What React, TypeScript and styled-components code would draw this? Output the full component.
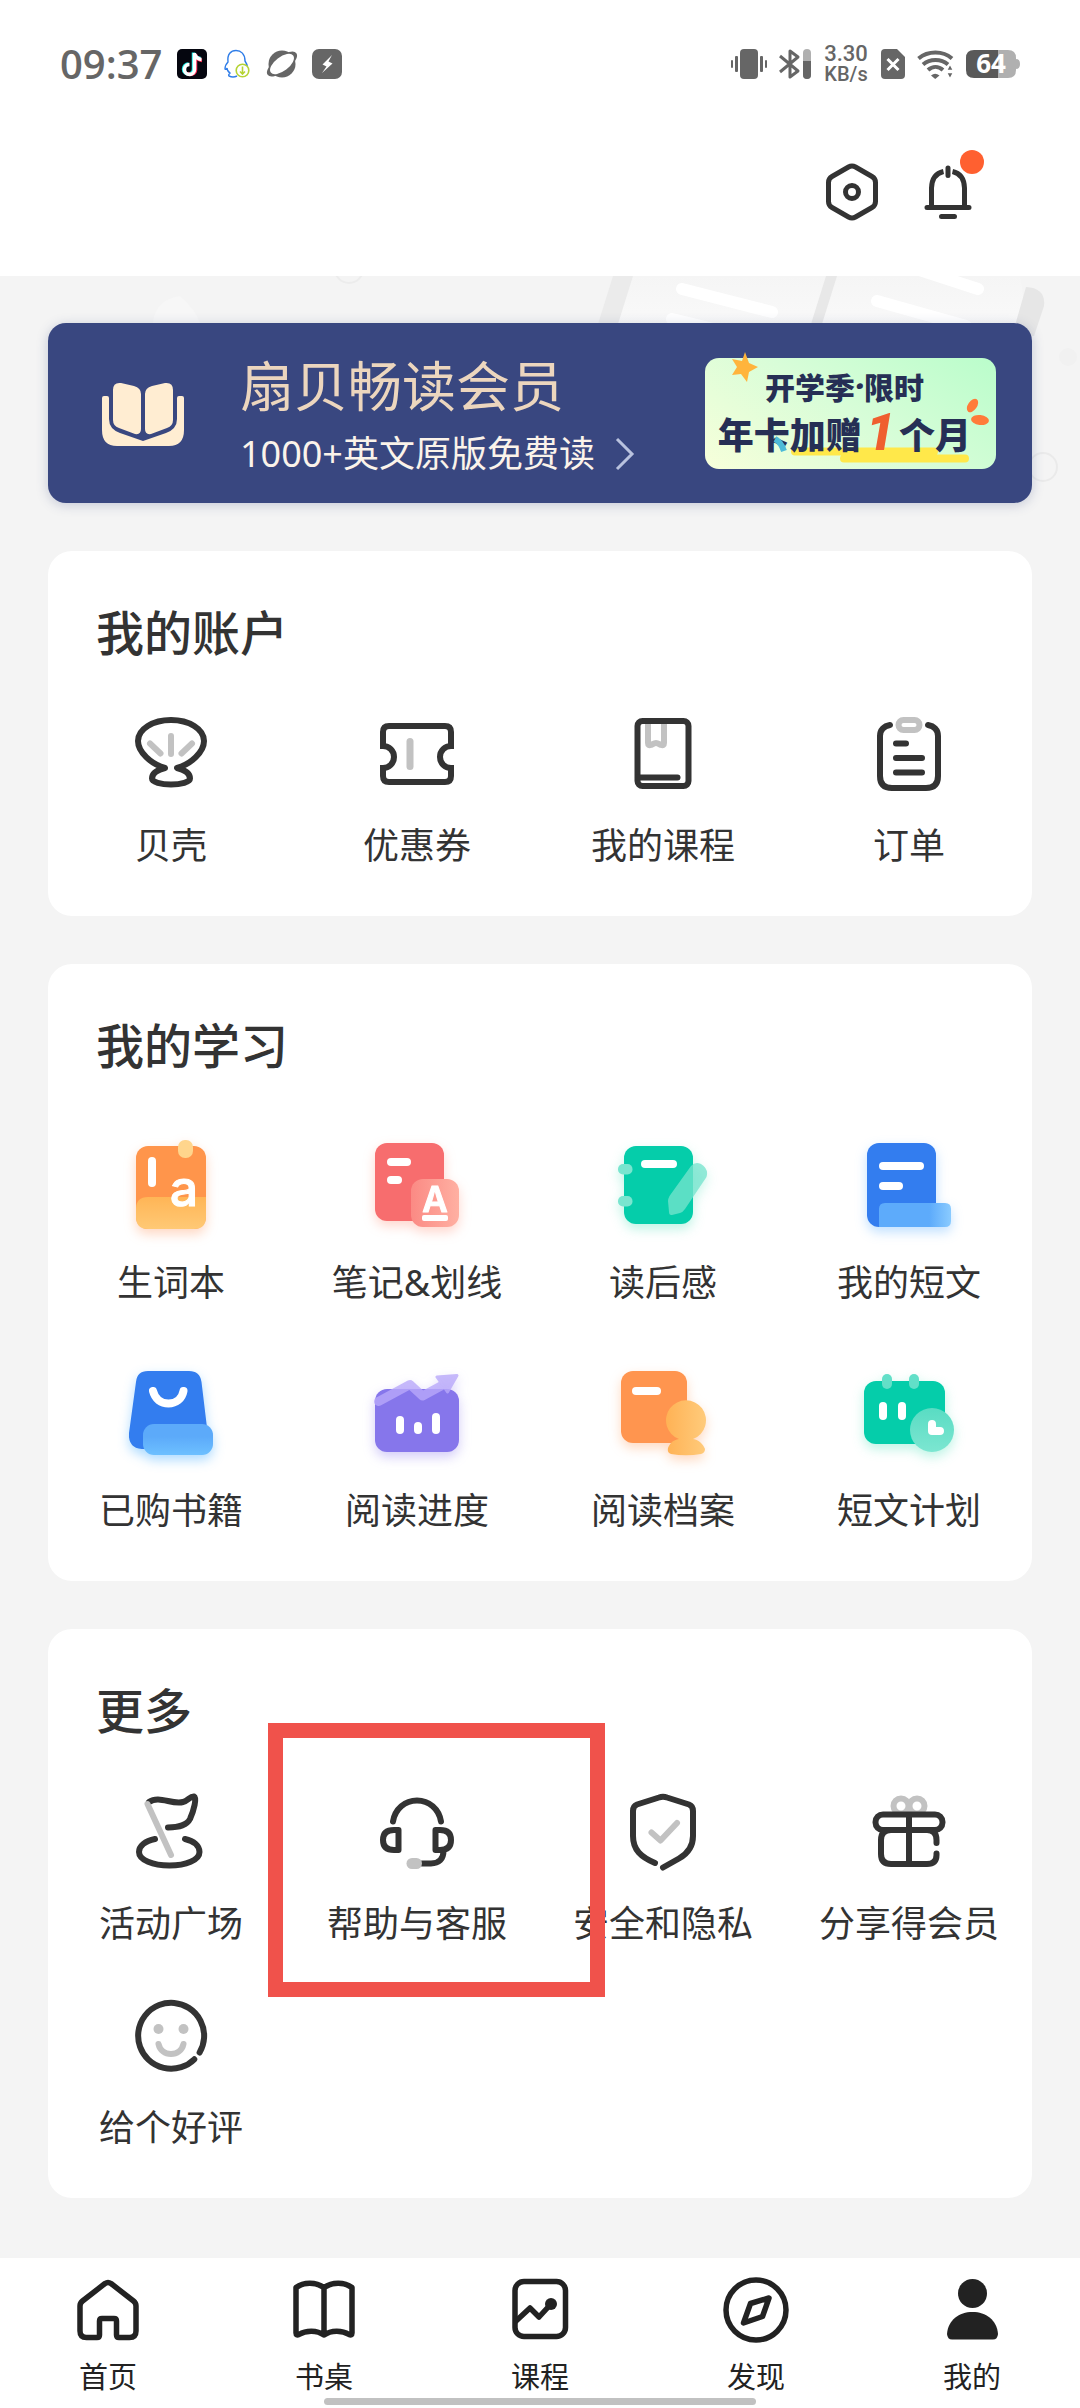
import React from "react";
import styled, { createGlobalStyle, css } from "styled-components";

const GlobalStyle = createGlobalStyle`
  * { box-sizing: border-box; }
  body {
    margin: 0;
    background: #f4f4f4;
    color: #333;
    font-family: "Noto Sans", "Noto Sans CJK SC", sans-serif;
  }
  a { color: inherit; text-decoration: none; }
  svg { display: block; flex: none; overflow: visible; }
`;

/* ---------- layout ---------- */

const Page = styled.div`
  display: flex;
  flex-direction: column;
  min-height: 100vh;
`;

const Header = styled.header`
  background: #fff;
  padding-bottom: 20px;
`;

const StatusBar = styled.div`
  display: flex;
  justify-content: space-between;
  align-items: center;
  height: 128px;
  padding: 0 60px;
  color: #666;
`;

const StatusGroup = styled.div<{ $gap: number }>`
  display: flex;
  align-items: center;
  gap: ${(p) => p.$gap}px;
`;

const Clock = styled.time`
  font-family: "Open Sans", sans-serif;
  font-size: 40px;
  line-height: 48px;
  font-weight: 600;
`;

const Speed = styled.div`
  display: flex;
  flex-direction: column;
  align-items: center;
  width: 46px;
  font-family: Roboto, sans-serif;
  font-size: 22px;
  line-height: 20px;
  font-weight: 500;
`;

const SpeedUnit = styled.span`
  font-size: 20px;
`;

const Toolbar = styled.div`
  display: flex;
  justify-content: flex-end;
  align-items: center;
  gap: 36px;
  height: 128px;
  padding: 0 102px;
`;

const IconButton = styled.button`
  position: relative;
  width: 60px;
  height: 60px;
  padding: 0;
  border: 0;
  background: none;
  color: #333;
`;

const UnreadDot = styled.span`
  position: absolute;
  top: -12px;
  right: -6px;
  width: 24px;
  height: 24px;
  border-radius: 50%;
  background: #ff6030;
`;

const Body = styled.main`
  position: relative;
  display: flex;
  flex: 1;
  flex-direction: column;
  gap: 48px;
  padding: 47px 48px 60px;
`;

const Backdrop = styled.div`
  position: absolute;
  top: 0;
  left: 0;
  right: 0;
  overflow: hidden;
`;

/* ---------- membership banner ---------- */

const Banner = styled.a`
  position: relative;
  display: flex;
  align-items: center;
  height: 180px;
  padding: 0 36px 0 54px;
  border-radius: 18px;
  background: #394780;
  box-shadow: 0 2px 12px rgba(57, 71, 128, 0.25);
`;

const BannerText = styled.div`
  display: flex;
  flex-direction: column;
  gap: 6px;
  margin-left: 56px;
`;

const BannerTitle = styled.span`
  color: #ecd6be;
  font-size: 54px;
  line-height: 76px;
`;

const BannerSub = styled.span`
  display: flex;
  align-items: center;
  gap: 20px;
  color: #fbf3ea;
  font-size: 36px;
  line-height: 48px;
`;

const Promo = styled.div`
  position: relative;
  display: flex;
  flex-direction: column;
  align-items: center;
  width: 291px;
  height: 111px;
  margin-left: auto;
  padding: 9px 12px 0 0;
  border-radius: 14px;
  background: linear-gradient(35deg, #f7ffda 0%, #d8fdd8 50%, #bafdcb 100%);
  color: #262f55;
  font-family: "Noto Sans CJK SC", sans-serif;
  font-style: oblique 8deg;
  font-weight: 900;
`;

const PromoArt = styled.svg`
  position: absolute;
  top: 0;
  left: 0;
`;

const PromoTop = styled.span`
  position: relative;
  display: flex;
  font-size: 30px;
  line-height: 38px;
`;

const PromoDot = styled.span`
  font-family: "Noto Sans", sans-serif;
`;

const PromoBottom = styled.span`
  position: relative;
  display: flex;
  align-items: center;
  gap: 4px;
  font-size: 36px;
  line-height: 56px;
`;

const PromoCount = styled.b`
  color: #ef5f2f;
  font-family: Roboto, sans-serif;
  font-size: 52px;
  font-weight: 900;
`;

/* ---------- cards ---------- */

type Kind = "line" | "color";

const kinds = {
  line: { top: 42, gap: 24, rowGap: 42 },
  color: { top: 45, gap: 13, rowGap: 45 },
};

const Card = styled.section`
  position: relative;
  padding: 48px 0 45px;
  border-radius: 24px;
  background: #fff;
`;

const CardTitle = styled.h2`
  margin: 0;
  padding: 0 48px;
  font-size: 48px;
  line-height: 68px;
  font-weight: 500;
`;

const Grid = styled.div<{ $kind: Kind }>`
  display: grid;
  grid-template-columns: repeat(4, 1fr);
  row-gap: ${(p) => kinds[p.$kind].rowGap}px;
  margin-top: ${(p) => kinds[p.$kind].top}px;
`;

const Item = styled.a<{ $kind: Kind; $marked?: boolean }>`
  position: relative;
  display: flex;
  flex-direction: column;
  align-items: center;
  gap: ${(p) => kinds[p.$kind].gap}px;
  ${(p) =>
    p.$marked &&
    css`
      z-index: 1;
      &::after {
        content: "";
        position: absolute;
        inset: -64px -65px -48px -26px;
        border: 15px solid #f0524b;
      }
    `}
`;

const ItemLabel = styled.span`
  font-size: 36px;
  line-height: 50px;
  white-space: nowrap;
`;

/* ---------- bottom navigation ---------- */

const Nav = styled.nav`
  background: #fff;
  color: #222;
  padding: 16px 0 3px;
`;

const Tabs = styled.div`
  display: grid;
  grid-template-columns: repeat(5, 1fr);
`;

const Tab = styled.a`
  display: flex;
  flex-direction: column;
  align-items: center;
  gap: 10px;
  font-size: 29px;
  line-height: 42px;
`;

const HomeBar = styled.div`
  width: 40%;
  height: 7px;
  margin: 0 auto;
  border-radius: 4px;
  background: #c1c1c1;
`;

/* ---------- icon frames ---------- */

const LineIcon = ({ children }: { children: React.ReactNode }) => (
  <svg width="88" height="88" viewBox="0 0 88 88" fill="none" stroke="#333" strokeWidth="6" strokeLinecap="round" strokeLinejoin="round" aria-hidden="true">
    {children}
  </svg>
);

const GlowSvg = styled.svg<{ $glow: string }>`
  filter: drop-shadow(0 5px 6px ${(p) => p.$glow});
`;

const ColorIcon = ({ glow, children }: { glow: string; children: React.ReactNode }) => (
  <GlowSvg $glow={glow} width="120" height="120" viewBox="0 0 120 120" aria-hidden="true">
    {children}
  </GlowSvg>
);

const TabIcon = ({ children }: { children: React.ReactNode }) => (
  <svg width="72" height="72" viewBox="0 0 72 72" fill="none" stroke="#222" strokeWidth="5.5" strokeLinecap="round" strokeLinejoin="round" aria-hidden="true">
    {children}
  </svg>
);

const PALE = "#c2c2c2";

/* ---------- card data ---------- */

type Entry = { label: string; icon: React.ReactNode; marked?: boolean };

const account: Entry[] = [
  {
    label: "贝壳",
    icon: (
      <LineIcon>
        <path d="M38 59C24 55 11 43 11 32C11 20 26 11 44 11C62 11 77 20 77 32C77 43 64 55 50 59C58 61 63 65 63 69.500C63 73 54 75.500 44 75.500C34 75.500 25 73 25 69.500C25 65 30 61 38 59Z" />
        <path stroke={PALE} d="M23 34.500L33.500 44.500M44 27V45M65 34.500L54.500 44.500" />
      </LineIcon>
    ),
  },
  {
    label: "优惠券",
    icon: (
      <LineIcon>
        <path strokeLinejoin="miter" d="M10 37V23Q10 17 16 17H72Q78 17 78 23V37A11 11 0 0 0 78 59V67Q78 73 72 73H16Q10 73 10 67V59A11 11 0 0 0 10 37Z" />
        <path stroke={PALE} strokeWidth="7" d="M37 32.500V57.500" />
      </LineIcon>
    ),
  },
  {
    label: "我的课程",
    icon: (
      <LineIcon>
        <path stroke={PALE} d="M29 15V34Q29 37 32 36L34 35Q37 33 40 35L42 36Q45 37 45 34V15" />
        <rect x="18.500" y="12" width="51" height="65" rx="5" />
        <path d="M19 68.500H58.500" />
      </LineIcon>
    ),
  },
  {
    label: "订单",
    icon: (
      <LineIcon>
        <path d="M25 16C19 17 15 21 15 27V67Q15 79 27 79H61Q73 79 73 67V27C73 21 69 17 63 16M31 34.500H41M31 49H57M31 63.500H57" />
        <rect x="33.500" y="11" width="21" height="10" rx="5" stroke={PALE} />
      </LineIcon>
    ),
  },
];

const study: Entry[] = [
  {
    label: "生词本",
    icon: (
      <ColorIcon glow="rgba(255,140,80,.35)">
        <linearGradient id="wordFoot" x1="0" y1="0" x2="0" y2="1">
          <stop offset="0" stopColor="#ffb556" />
          <stop offset="1" stopColor="#ffc975" />
        </linearGradient>
        <rect x="25" y="21" width="70" height="83" rx="12" fill="#ff954b" />
        <path fill="url(#wordFoot)" d="M25 84Q25 72 37 72H95V92Q95 104 83 104H37Q25 104 25 92Z" />
        <rect x="67" y="15" width="15" height="18" rx="7" fill="#ffd58c" />
        <rect x="37" y="32" width="8" height="30" rx="4" fill="#fff" />
        <text x="73" y="81" fill="#fff" stroke="#fff" strokeWidth="1" fontFamily="Inter, sans-serif" fontWeight="500" fontSize="50" textAnchor="middle">a</text>
      </ColorIcon>
    ),
  },
  {
    label: "笔记&划线",
    icon: (
      <ColorIcon glow="rgba(255,120,90,.3)">
        <linearGradient id="noteTile">
          <stop offset="0" stopColor="#fb8a84" />
          <stop offset="1" stopColor="#ffb0a2" />
        </linearGradient>
        <rect x="18" y="18" width="69" height="78" rx="12" fill="#f76d6e" />
        <rect x="54" y="54" width="48" height="48" rx="12" fill="url(#noteTile)" />
        <rect x="30" y="33" width="24" height="8" rx="4" fill="#fff" />
        <rect x="30" y="51" width="15" height="8" rx="4" fill="#fff" />
        <text x="78" y="87" fill="#fff" stroke="#fff" strokeWidth="1" strokeLinejoin="round" fontFamily="Inter, sans-serif" fontWeight="600" fontSize="35" textAnchor="middle">A</text>
        <rect x="65" y="90" width="26" height="6" rx="2" fill="#fff" />
      </ColorIcon>
    ),
  },
  {
    label: "读后感",
    icon: (
      <ColorIcon glow="rgba(40,220,170,.3)">
        <rect x="21" y="21" width="69" height="78" rx="12" fill="#05cdaa" />
        <rect x="15" y="39" width="14.500" height="10.500" rx="5" fill="#79e5cf" />
        <rect x="15" y="71" width="14.500" height="10.500" rx="5" fill="#79e5cf" />
        <rect x="38" y="35" width="36" height="8" rx="4" fill="#fff" />
        <path fill="rgba(117,228,206,.77)" d="M65 76Q65 74 66.500 71L88 41Q92 36.500 98 39Q106 44 103.500 52L82 84Q80 87 77 88L69 90Q66 90.500 66 87Z" />
      </ColorIcon>
    ),
  },
  {
    label: "我的短文",
    icon: (
      <ColorIcon glow="rgba(60,160,255,.32)">
        <linearGradient id="essayFoot">
          <stop offset=".7" stopColor="#5dabfb" />
          <stop offset="1" stopColor="#8acbff" />
        </linearGradient>
        <rect x="18" y="18" width="69" height="84" rx="12" fill="#337def" />
        <path fill="url(#essayFoot)" d="M30 84Q30 78 36 78H96Q102 78 102 84V96Q102 102 96 102H30Z" />
        <rect x="30" y="37" width="45" height="8" rx="4" fill="#fff" />
        <rect x="30" y="57" width="24" height="8" rx="4" fill="#fff" />
      </ColorIcon>
    ),
  },
  {
    label: "已购书籍",
    icon: (
      <ColorIcon glow="rgba(40,160,255,.38)">
        <linearGradient id="bagFoot" x1="0" y1="0" x2="0" y2="1">
          <stop offset=".4" stopColor="#5caafa" />
          <stop offset="1" stopColor="#6dc0ff" />
        </linearGradient>
        <path fill="#337def" d="M37 18H78Q89 18 90.500 29L97 83Q98 96 86 96H31Q17 95 18 80L25 29Q26 18 37 18Z" />
        <rect x="32" y="71" width="70" height="31" rx="11" fill="url(#bagFoot)" />
        <path fill="none" stroke="#fff" strokeWidth="8" strokeLinecap="round" d="M42 38C44 46 50 50.500 57.500 50.500S71 46 72.500 38" />
      </ColorIcon>
    ),
  },
  {
    label: "阅读进度",
    icon: (
      <ColorIcon glow="rgba(130,110,235,.35)">
        <rect x="18" y="36" width="84" height="63" rx="12" fill="#8676eb" />
        <g opacity=".8">
          <path fill="none" stroke="#b9a9fa" strokeWidth="9" strokeLinecap="round" strokeLinejoin="round" d="M21.500 48.500L53 31.500L65.500 43L84 33" />
          <path fill="#b9a9fa" stroke="#b9a9fa" strokeWidth="3" strokeLinejoin="round" d="M80 24L100 22.500L90.500 39Z" />
        </g>
        <rect x="39" y="63" width="8" height="18" rx="4" fill="#fff" />
        <rect x="57" y="69" width="8" height="12" rx="4" fill="#fff" />
        <rect x="75" y="60" width="8" height="21" rx="4" fill="#fff" />
      </ColorIcon>
    ),
  },
  {
    label: "阅读档案",
    icon: (
      <ColorIcon glow="rgba(255,150,80,.35)">
        <linearGradient id="fileSeal">
          <stop offset="0" stopColor="#ffb255" />
          <stop offset="1" stopColor="#ffcb7b" />
        </linearGradient>
        <rect x="18" y="18" width="66" height="72" rx="12" fill="#ff954f" />
        <path fill="url(#fileSeal)" d="M76 86A20 20 0 1 1 90 86C96 87 100 91 102 96Q102 100 98 101Q83 103.500 68 101Q64 100 65 95C67 90 70 87 76 86Z" />
        <rect x="29" y="34" width="29" height="8" rx="4" fill="#fff" />
      </ColorIcon>
    ),
  },
  {
    label: "短文计划",
    icon: (
      <ColorIcon glow="rgba(40,220,170,.3)">
        <linearGradient id="planClock" x1="0" y1="0" x2="0" y2="1">
          <stop offset="0" stopColor="#59dcc3" />
          <stop offset="1" stopColor="#7ce6d1" />
        </linearGradient>
        <rect x="15" y="28" width="81" height="63" rx="12" fill="#05cdaa" />
        <rect x="33" y="21" width="10" height="15" rx="5" fill="#62dfc8" />
        <rect x="60" y="21" width="10" height="15" rx="5" fill="#62dfc8" />
        <rect x="30" y="49" width="8" height="18" rx="4" fill="#fff" />
        <rect x="49" y="49" width="8" height="18" rx="4" fill="#fff" />
        <circle cx="83" cy="77" r="22" fill="url(#planClock)" />
        <path fill="none" stroke="#fff" strokeWidth="8" strokeLinecap="round" strokeLinejoin="round" d="M83 71V78H91" />
      </ColorIcon>
    ),
  },
];

const more: Entry[] = [
  {
    label: "活动广场",
    icon: (
      <LineIcon>
        <path d="M22 15C32 8 45 18 56 15C61 14 63 9 67 9.500C70 11 67 23 63 32C60 38 53 40 41 40.500M28 52C18 54 12 59 12 65C12 73 26 78.500 42.500 78.500C59 78.500 72.500 73 72.500 65C72.500 59 67 54 58 52" />
        <path stroke={PALE} d="M20.500 17L44 68" />
      </LineIcon>
    ),
  },
  {
    label: "帮助与客服",
    marked: true,
    icon: (
      <LineIcon>
        <path d="M20 34.500C22 22 32 13.500 44 13.500C56 13.500 66 22 68 34.500M25.500 43H21Q10 43 10 53Q10 63 21 63H25.500ZM62.500 43H67Q78 43 78 53Q78 63 67 63H62.500ZM70.500 64C70.500 72 66 76.500 58 76.500H49" />
        <rect x="33.500" y="71" width="15.500" height="11" rx="5.500" fill={PALE} stroke="none" />
      </LineIcon>
    ),
  },
  {
    label: "安全和隐私",
    icon: (
      <LineIcon>
        <path d="M36 76C22 70 14 63 14 49V24Q14 19 18 17.500L40 10.500Q44 9 48 10.500L70 17.500Q74 19 74 24V49C74 60 68 67 60 71.500L44 80.500" />
        <path stroke={PALE} d="M32.500 45.500L41.500 53.500L58 36" />
      </LineIcon>
    ),
  },
  {
    label: "分享得会员",
    icon: (
      <LineIcon>
        <g stroke={PALE}>
          <circle cx="36" cy="19" r="7.500" />
          <circle cx="52" cy="19" r="7.500" />
        </g>
        <rect x="10.500" y="27.500" width="67" height="15.500" rx="7.500" fill="#fff" />
        <path d="M71.500 56V53Q71.500 43 62 43H26Q16 43 16 53V67Q16 77 26 77H62Q71.500 77 71.500 68V66.500M44 28V77" />
      </LineIcon>
    ),
  },
  {
    label: "给个好评",
    icon: (
      <LineIcon>
        <path d="M72.600 61.500A33 33 0 1 0 67.300 68.300" />
        <g fill={PALE} stroke="none">
          <circle cx="31.500" cy="38" r="5" />
          <circle cx="56.500" cy="38" r="5" />
        </g>
        <path stroke={PALE} d="M31.500 53C33 59.500 38 63 44 63S55 59.500 56.500 53" />
      </LineIcon>
    ),
  },
];

const tabs: Entry[] = [
  {
    label: "首页",
    icon: (
      <TabIcon>
        <path d="M8 32Q8 29 10.500 27L33 9.500Q36 7.500 39 9.500L61.500 27Q64 29 64 32V57Q64 63.500 57.500 63.500H47Q44.500 63.500 44.500 61V47Q44.500 44.500 42 44.500H30Q27.500 44.500 27.500 47V61Q27.500 63.500 25 63.500H14.500Q8 63.500 8 57Z" />
      </TabIcon>
    ),
  },
  {
    label: "书桌",
    icon: (
      <TabIcon>
        <path d="M36 13.500C28 8 16 7.500 8 13.500V59Q8 62 11 60.500C18 56 29 56 36 61C43 56 54 56 61 60.500Q64 62 64 59V13.500C56 7.500 44 8 36 13.500V61" />
      </TabIcon>
    ),
  },
  {
    label: "课程",
    icon: (
      <TabIcon>
        <rect x="11" y="7.500" width="50.500" height="55" rx="9" />
        <path d="M12 47L26 34L35 43L47 30" />
        <circle cx="47" cy="30" r="6" fill="#222" stroke="none" />
      </TabIcon>
    ),
  },
  {
    label: "发现",
    icon: (
      <TabIcon>
        <circle cx="36" cy="36" r="30" />
        <path d="M49 24L30.500 29.500L23.500 49L42.500 42.500Z" />
      </TabIcon>
    ),
  },
  {
    label: "我的",
    icon: (
      <TabIcon>
        <g fill="#222" stroke="none">
          <circle cx="36.500" cy="19.500" r="14.500" />
          <path d="M11 60C12 46 23 38 36.500 38C50 38 61 46 62 60Q61.500 65.500 57 65.500H16Q11.500 65.500 11 60Z" />
        </g>
      </TabIcon>
    ),
  },
];

/* ---------- sections ---------- */

const EntryCard = ({ title, kind, entries }: { title: string; kind: Kind; entries: Entry[] }) => (
  <Card>
    <CardTitle>{title}</CardTitle>
    <Grid $kind={kind}>
      {entries.map((e) => (
        <Item key={e.label} href="#" $kind={kind} $marked={e.marked}>
          {e.icon}
          <ItemLabel>{e.label}</ItemLabel>
        </Item>
      ))}
    </Grid>
  </Card>
);

const StatusLeft = () => (
  <StatusGroup $gap={15}>
    <Clock>09:37</Clock>
    <svg width="30" height="30" viewBox="0 0 30 30" aria-hidden="true">
      <rect width="30" height="30" rx="5" fill="#05060f" />
      <g fill="none" strokeWidth="3.500">
        <path stroke="#25f4ee" d="M16.500 3.500V20A5 5 0 1 1 11.500 15M16.500 4Q18 9 23.500 9.500" />
        <path stroke="#fe2c55" d="M18.500 5V21A5 5 0 0 1 10 24M18.500 6Q20 11 25 11.500" />
        <path stroke="#fff" d="M17.500 4V20.500A5 5 0 1 1 12.500 15.500M17.500 4.500Q19 10 24.500 10.500" />
      </g>
    </svg>
    <svg width="30" height="30" viewBox="0 0 30 30" fill="none" aria-hidden="true">
      <path stroke="#2f7de8" strokeWidth="1.400" d="M15 27Q11 29 7 27Q6 26 8 24Q5 22 5 19Q4 21 3 20Q3 16 6 13C5 5 9 1.500 14 1.500S23 5 23 12Q25 15 25.500 18" />
      <circle cx="20.500" cy="21.500" r="6.300" fill="#fff" stroke="#b5d333" strokeWidth="1.600" />
      <path stroke="#b5d333" strokeWidth="1.600" d="M20.500 17.500V25M18 22.500L20.500 25L23 22.500" />
    </svg>
    <svg width="30" height="30" viewBox="0 0 30 30" aria-hidden="true">
      <circle cx="15" cy="15" r="13.500" fill="#666" />
      <ellipse cx="15" cy="15" rx="18" ry="7.500" fill="#666" transform="rotate(-37 15 15)" />
      <ellipse cx="15" cy="15" rx="14" ry="7" fill="#fff" transform="rotate(-37 15 15)" />
    </svg>
    <svg width="30" height="30" viewBox="0 0 30 30" aria-hidden="true">
      <rect width="30" height="30" rx="7" fill="#666" />
      <path fill="#fff" d="M20 6L10.500 15.500L14.500 17.500L10 24L20.500 14.500L16.500 12.500Z" />
    </svg>
  </StatusGroup>
);

const StatusRight = () => (
  <StatusGroup $gap={12}>
    <svg width="36" height="30" viewBox="0 0 36 30" fill="#666" aria-hidden="true">
      <rect x="9" width="18" height="30" rx="4" />
      <rect y="11" width="2" height="8" rx="1" />
      <rect x="4" y="7" width="3" height="16" rx="1" />
      <rect x="29" y="7" width="3" height="16" rx="1" />
      <rect x="34" y="11" width="2" height="8" rx="1" />
    </svg>
    <svg width="32" height="30" viewBox="0 0 32 30" aria-hidden="true">
      <path fill="none" stroke="#666" strokeWidth="3" strokeLinejoin="round" d="M1 7L19 22L11 28V2L19 8L1 23" />
      <rect x="24" width="8" height="30" rx="4" fill="#b0b0b0" />
      <path fill="#666" d="M24 12H32V26A4 4 0 0 1 24 26Z" />
    </svg>
    <Speed>
      <span>3.30</span>
      <SpeedUnit>KB/s</SpeedUnit>
    </Speed>
    <svg width="24" height="30" viewBox="0 0 24 30" aria-hidden="true">
      <path fill="#666" d="M4 0H16L24 8V26A4 4 0 0 1 20 30H4A4 4 0 0 1 0 26V4A4 4 0 0 1 4 0Z" />
      <path stroke="#fff" strokeWidth="3" d="M6.500 10L17.500 21M17.500 10L6.500 21" />
    </svg>
    <svg width="37" height="30" viewBox="0 0 37 30" aria-hidden="true">
      <g fill="none" stroke="#666" strokeWidth="4">
        <path d="M1.500 9.500C11 1.500 26 1.500 35 9.500" />
        <path d="M6 15.500C13 9.500 24 9.500 31 15.500" />
        <path d="M11 21C15.500 17 21.500 17 26 21" />
      </g>
      <path fill="#666" d="M14 26.500Q18 23 22.500 26.500L18.200 30Z" />
      <path fill="#666" stroke="#fff" strokeWidth="1.500" d="M29.500 21.500L33 15L36.500 21.500ZM29.500 23.500L33 30L36.500 23.500Z" />
    </svg>
    <svg width="54" height="28" viewBox="0 0 54 28" role="img" aria-label="64%">
      <path fill="#b0b0b0" d="M32 0H42Q50 0 50 8V9Q54 9 54 14T50 19V20Q50 28 42 28H32Z" />
      <path fill="#595959" d="M8 0H32V28H8Q0 28 0 20V8Q0 0 8 0Z" />
      <text x="25" y="23" fill="#fff" fontFamily="Noto Sans, sans-serif" fontWeight="700" fontSize="26" textAnchor="middle">64</text>
    </svg>
  </StatusGroup>
);

export default function App() {
  return (
    <Page>
      <GlobalStyle />
      <Header>
        <StatusBar>
          <StatusLeft />
          <StatusRight />
        </StatusBar>
        <Toolbar>
          <IconButton type="button" aria-label="设置">
            <svg width="60" height="60" viewBox="0 0 60 60" fill="none" stroke="#333" strokeWidth="5">
              <path d="M26.500 5Q30 3 33.500 5L50 14.500Q53.500 16.500 53.500 20.500V39.500Q53.500 43.500 50 45.500L33.500 55Q30 57 26.500 55L10 45.500Q6.500 43.500 6.500 39.500V20.500Q6.500 16.500 10 14.500Z" />
              <circle cx="30" cy="30" r="6.500" />
            </svg>
          </IconButton>
          <IconButton type="button" aria-label="消息">
            <svg width="60" height="60" viewBox="0 0 60 60" fill="none" stroke="#333" strokeWidth="5">
              <path d="M13.500 45V26Q14 12 25.500 9.500M34.500 9.500Q46 12 46.500 26V45" />
              <path strokeLinecap="round" d="M9 45.500H51M23.500 54.500H36.500M30 6V13.500" />
            </svg>
            <UnreadDot />
          </IconButton>
        </Toolbar>
      </Header>

      <Body>
        <Backdrop aria-hidden="true">
          <svg width="100%" viewBox="0 0 1080 227">
            <linearGradient id="paper" x1="0" y1="0" x2="0" y2="1">
              <stop offset="0" stopColor="#f5f5f5" />
              <stop offset="1" stopColor="#fafafa" />
            </linearGradient>
            <path fill="url(#paper)" d="M632 0H1020L1030 60H612Z" />
            <path fill="#ebebeb" d="M613 0H633L618 48H598Z" />
            <path fill="#e8e8e8" d="M826 0H837L822 48H811Z" />
            <path fill="#e6e6e6" d="M1026 11Q1046 12 1044 30L1034 60H1012Z" />
            <g stroke="#fff" strokeWidth="12" strokeLinecap="round">
              <path d="M682 13L772 36M672 43L730 57M877 25L966 50M895 -14L978 13" />
            </g>
            <circle cx="349" cy="-7" r="14" fill="none" stroke="#ececec" strokeWidth="2" />
            <circle cx="1043" cy="191" r="14" fill="none" stroke="#eaeaea" strokeWidth="2" />
            <circle cx="1068" cy="81" r="9" fill="#f1f1f1" />
            <path fill="#f7f7f7" d="M153 47Q155 24 180 20Q196 34 200 47Z" />
          </svg>
        </Backdrop>

        <Banner href="#">
          <svg width="82" height="68" viewBox="0 0 82 68" fill="#ffedd2" aria-hidden="true">
            <path d="M11 11Q11 3 19 4L32 7Q39 9 39 15V50Q39 56 33 55L17 49Q11 47 11 41Z" />
            <path d="M71 11Q71 3 63 4L50 7Q43 9 43 15V50Q43 56 49 55L65 49Q71 47 71 41Z" />
            <path d="M0 19Q0 17 2 17H5Q7 17 7 19V40Q7 50 18 54L41 62L64 54Q75 50 75 40V19Q75 17 77 17H80Q82 17 82 19V51Q82 67 67 67H15Q0 67 0 51Z" />
          </svg>
          <BannerText>
            <BannerTitle>扇贝畅读会员</BannerTitle>
            <BannerSub>
              1000+英文原版免费读
              <svg width="20" height="32" viewBox="0 0 20 32" fill="none" stroke="#b9c2de" strokeWidth="3" aria-hidden="true">
                <path d="M2 1L17 16L2 31" />
              </svg>
            </BannerSub>
          </BannerText>
          <Promo>
            <PromoArt width="291" height="111" viewBox="0 0 291 111" aria-hidden="true">
              <path fill="#ffb43c" d="M40 -6L44 5L53 9L44 14L42 24L36 16L27 17L32 9L27 1L37 3Z" />
              <path stroke="#ffe84a" strokeWidth="8" strokeLinecap="round" d="M90 93.500H229M139 100.500H260" />
            </PromoArt>
            <PromoTop>
              开学季<PromoDot>·</PromoDot>限时
            </PromoTop>
            <PromoBottom>
              年卡加赠<PromoCount>1</PromoCount>个月
            </PromoBottom>
            <PromoArt width="291" height="111" viewBox="0 0 291 111" aria-hidden="true">
              <path stroke="#4dbbd8" strokeWidth="6" d="M70 81Q76 84 79 93" fill="none" />
              <ellipse cx="267.500" cy="47.500" rx="7.500" ry="4.500" fill="#ff7b3a" transform="rotate(-55 267.500 47.500)" />
              <ellipse cx="275" cy="62" rx="9" ry="5" fill="#ff7b3a" transform="rotate(6 275 62)" />
            </PromoArt>
          </Promo>
        </Banner>

        <EntryCard title="我的账户" kind="line" entries={account} />
        <EntryCard title="我的学习" kind="color" entries={study} />
        <EntryCard title="更多" kind="line" entries={more} />
      </Body>

      <Nav>
        <Tabs>
          {tabs.map((t) => (
            <Tab key={t.label} href="#">
              {t.icon}
              <span>{t.label}</span>
            </Tab>
          ))}
        </Tabs>
        <HomeBar />
      </Nav>
    </Page>
  );
}
